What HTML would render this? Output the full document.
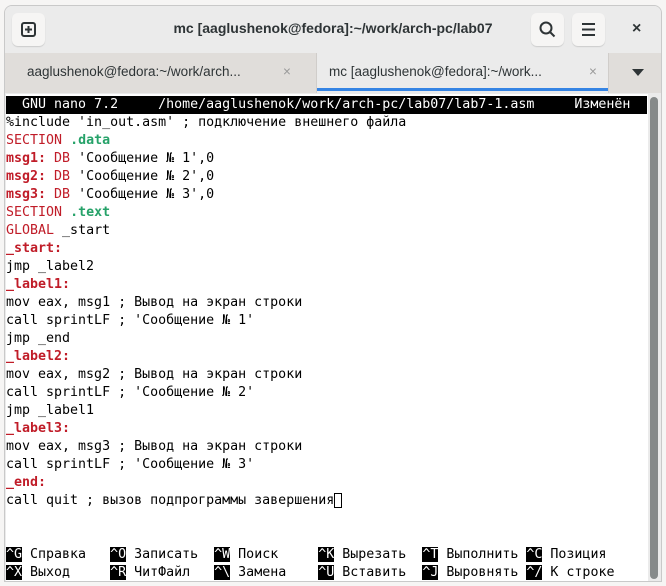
<!DOCTYPE html>
<html><head><meta charset="utf-8"><style>
body{margin:0;width:666px;height:586px;background:#f6f5f4;position:relative;overflow:hidden;font-family:"Liberation Sans","DejaVu Sans",sans-serif}
.win{position:absolute;left:4px;top:5px;width:658px;height:577px;background:#ebebeb;border-radius:8px 8px 0 0;border:1px solid #c9c9c9;box-sizing:border-box;overflow:hidden}
.hb{position:absolute;left:0;top:0;width:100%;height:47px;background:#ebebeb;border-bottom:1px solid #d6d6d6}
.btn{position:absolute;top:7px;width:33px;height:33px;background:#f6f5f4;border-radius:6px;box-shadow:0 1px 1px #ccc}
.title{position:absolute;left:0;right:0;top:14px;text-align:center;font-size:14px;font-weight:bold;color:#2e3436}
.tabs{position:absolute;left:0;top:47px;width:100%;height:40px;background:#e0ddda}
.tab{position:absolute;top:0;height:40px;font-size:13.5px;color:#2e3436;line-height:38px}
.term{position:absolute;left:1px;top:88px;width:642px;height:488px;background:#fff}
pre{margin:0;position:absolute;left:1px;top:90px;font-family:"DejaVu Sans Mono",monospace;font-size:13.3px;line-height:18px;color:#000}
.hd{background:#000;color:#fff;display:inline-block;width:641px}
.r{color:#c01c28}.rb{color:#c01c28;font-weight:bold}.g{color:#26a269;font-weight:bold}
.k{background:#000;color:#fff}
.cur{outline:1px solid #000;outline-offset:-1px}
</style></head><body>
<div class="win">
<div class="hb">
<div class="btn" style="left:7px"><svg width="33" height="33"><rect x="10" y="10" width="13" height="13" rx="2" fill="none" stroke="#2e3436" stroke-width="2"/><path d="M16.5 13v7M13 16.5h7" stroke="#2e3436" stroke-width="2"/></svg></div>
<div class="title">mc [aaglushenok@fedora]:~/work/arch-pc/lab07</div>
<div class="btn" style="left:526px"><svg width="33" height="33"><circle cx="15" cy="15" r="5.5" fill="none" stroke="#2e3436" stroke-width="2"/><path d="M19 19l4.5 4.5" stroke="#2e3436" stroke-width="2"/></svg></div>
<div class="btn" style="left:567px"><svg width="33" height="33"><path d="M10 11h13M10 16.5h13M10 22h13" stroke="#2e3436" stroke-width="2"/></svg></div>
<div style="position:absolute;left:627px;top:14px;font-size:16px;font-weight:bold;color:#2e3436">×</div>
</div>
<div class="tabs">
<div class="tab" style="left:0;width:311px;"><span style="margin-left:22px">aaglushenok@fedora:~/work/arch...</span><span style="position:absolute;left:278px;color:#999">×</span></div>
<div class="tab" style="left:311px;width:291px;background:#ebebeb;border-left:1px solid #d0cdca;border-right:1px solid #d0cdca"><span style="margin-left:12px">mc [aaglushenok@fedora]:~/work...</span><span style="position:absolute;left:272px;color:#999">×</span><div style="position:absolute;left:0;right:0;bottom:2px;height:3px;background:#3584e4"></div></div>
<div style="position:absolute;left:627px;top:16px;width:0;height:0;border-left:6px solid transparent;border-right:6px solid transparent;border-top:7px solid #2e3436"></div>
</div>
<div class="term"></div>
<div style="position:absolute;left:645px;top:91px;width:8px;height:482px;background:#868a8a;border-radius:4px"></div>
<pre><span class="hd">  GNU nano 7.2     /home/aaglushenok/work/arch-pc/lab07/lab7-1.asm     Изменён  </span>
%include 'in_out.asm' ; подключение внешнего файла
<span class="r">SECTION</span> <span class="g">.data</span>
<span class="rb">msg1:</span> <span class="r">DB</span> 'Сообщение № 1',0
<span class="rb">msg2:</span> <span class="r">DB</span> 'Сообщение № 2',0
<span class="rb">msg3:</span> <span class="r">DB</span> 'Сообщение № 3',0
<span class="r">SECTION</span> <span class="g">.text</span>
<span class="r">GLOBAL</span> _start
<span class="rb">_start:</span>
jmp _label2
<span class="rb">_label1:</span>
mov eax, msg1 ; Вывод на экран строки
call sprintLF ; 'Сообщение № 1'
jmp _end
<span class="rb">_label2:</span>
mov eax, msg2 ; Вывод на экран строки
call sprintLF ; 'Сообщение № 2'
jmp _label1
<span class="rb">_label3:</span>
mov eax, msg3 ; Вывод на экран строки
call sprintLF ; 'Сообщение № 3'
<span class="rb">_end:</span>
call quit ; вызов подпрограммы завершения<span class="cur"> </span>


<span class="k">^G</span> Справка   <span class="k">^O</span> Записать  <span class="k">^W</span> Поиск     <span class="k">^K</span> Вырезать  <span class="k">^T</span> Выполнить <span class="k">^C</span> Позиция
<span class="k">^X</span> Выход     <span class="k">^R</span> ЧитФайл   <span class="k">^\</span> Замена    <span class="k">^U</span> Вставить  <span class="k">^J</span> Выровнять <span class="k">^/</span> К строке</pre>
</div>
</body></html>
